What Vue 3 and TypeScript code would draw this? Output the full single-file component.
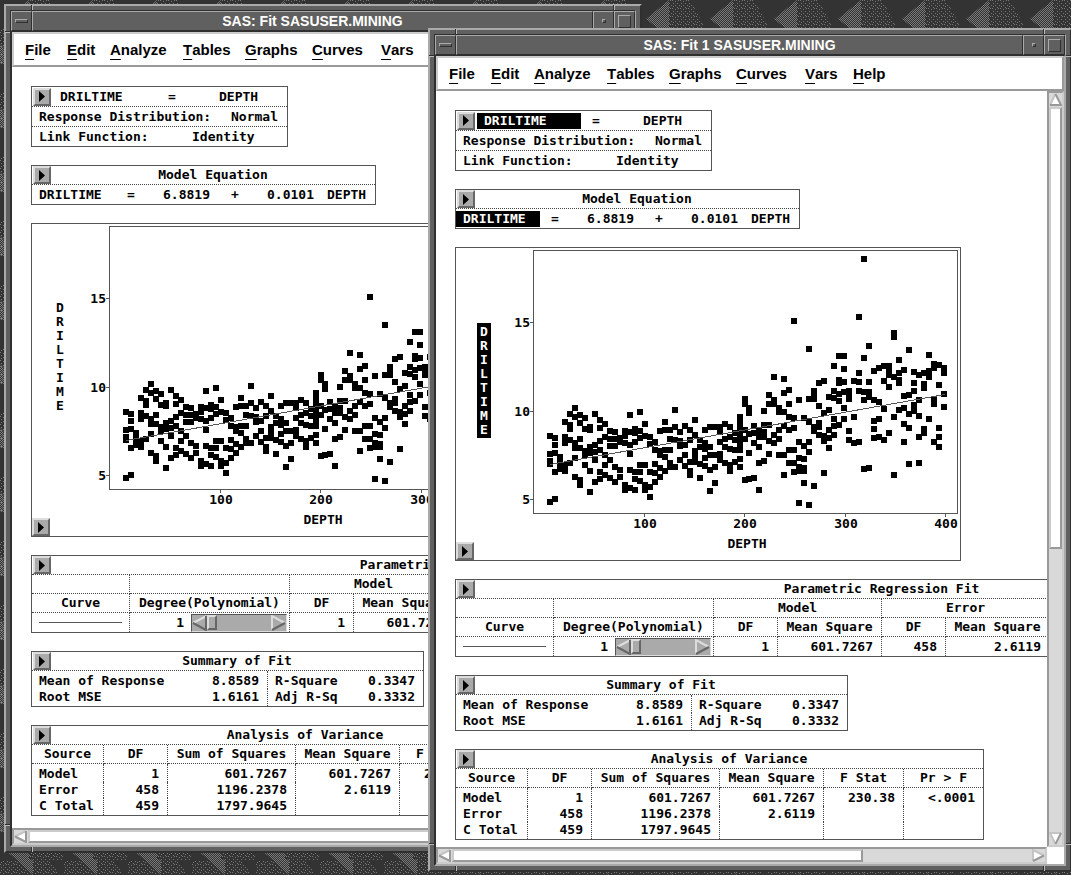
<script setup lang="ts">
interface FitWindow {
  id: string
  title: string
  selected: boolean
}

const windows: FitWindow[] = [
  { id: 'back', title: 'SAS: Fit SASUSER.MINING', selected: false },
  { id: 'front', title: 'SAS: Fit 1 SASUSER.MINING', selected: true },
]

const menus = ['File', 'Edit', 'Analyze', 'Tables', 'Graphs', 'Curves', 'Vars', 'Help']
const notches = ['v tl', 'v tr', 'v bl', 'v br', 'h lt', 'h rt', 'h lb', 'h rb']
const axisName = 'DRILTIME'.split('')

// Drill times per depth step, in thirds of a pixel below the top of each group.
const groups: { top: number; columns: number[][] }[] = [
  {
    top: 480,
    columns: [
      [109, 162, 183, 192, 306], [114, 135, 159, 216, 297], [172, 190, 207], [66, 111, 129, 195, 213],
      [42, 75, 87, 120, 190], [24, 51, 129, 144, 174, 231], [45, 69, 117, 144, 241, 255], [54, 87, 153, 164, 194],
      [81, 90, 141, 160, 213, 276], [42, 135, 155, 180, 247], [60, 84, 123, 150, 216, 237], [72, 111, 165, 195, 225],
      [93, 117, 138, 180, 234], [97, 117, 138, 201, 246], [114, 126, 210, 231], [94, 108, 128, 256, 270],
      [45, 96, 135, 161, 210, 264], [87, 100, 126, 216, 237, 270], [36, 93, 114, 195, 215, 243], [72, 108, 195, 255, 270],
      [111, 133, 216, 261, 291], [126, 150, 192, 219, 246], [93, 153, 165, 204, 231], [66, 90, 150, 171, 213],
      [90, 117, 150, 189, 201], [30, 80, 120, 200], [96, 122, 138, 180], [77, 135, 165, 198],
      [90, 120, 186, 213, 225], [60, 105, 153, 170, 186], [120, 141, 192, 234], [90, 129, 147, 174, 198],
      [81, 141, 165, 209, 273], [81, 165, 200, 249], [81, 95, 126, 162, 180], [72, 117, 141, 189],
      [81, 111, 147, 195, 213], [100, 120, 150, 185], [51, 66, 78, 90, 104, 120, 135, 150, 177, 201],
    ],
  },
  {
    top: 390,
    columns: [
      [87, 103, 180, 207, 330], [115, 128, 192, 249, 327], [168, 190, 219, 324], [183, 200, 231, 279, 360],
      [122, 165, 185, 200, 273], [75, 102, 165, 213, 252], [21, 90, 101, 195, 219], [113, 125, 180, 207, 255],
      [27, 69, 126, 168, 255, 315], [60, 102, 141, 180, 240, 279], [-147, 144, 174, 240, 279, 306],
      [90, 216, 264, 291, 303, 399], [144, 228, 267, 293, 303, 339], [-63, 87, 156, 216, 246, 405],
      [63, 75, 87, 171, 184, 348], [39, 108, 160, 172, 195], [33, 129, 198, 213, 309], [81, 120, 180, 204, 233],
      [-12, 63, 84, 147, 168, 195], [-42, 30, 40, 72, 92, 165], [-42, -3, 36, 66, 114, 147],
    ],
  },
  {
    top: 240,
    columns: [
      [213, 225, 237, 333, 360], [183, 292, 369], [-9, 159, 186, 213, 366], [-183, 114, 216, 240, 447],
      [78, 186, 216, 230, 444], [153, 240, 303, 327, 354], [144, 245, 297, 351], [138, 183, 267, 360],
      [138, 150, 165, 201, 339], [39, 50, 171, 291, 465], [120, 159, 180, 190, 270], [150, 228, 264, 312, 366],
      [90, 225, 282, 324, 432], [156, 189, 213, 255, 273], [165, 240, 288, 351, 429], [160, 192, 204, 327, 339],
      [105, 153, 171, 297], [132, 144, 240, 252, 366], [135, 195, 324, 351, 381], [144, 159, 222, 261],
    ],
  },
]

const points = groups
  .flatMap((g) => g.columns.map((ys) => ys.map((y) => y + g.top)))
  .flatMap((ys, k) =>
    ys.map((y) => ({ x: Math.round(95 + (k * 394) / 79) - 3, y: Math.round(y / 3) - 10 })),
  )

const yTicks = [
  { y: 75, label: '15' },
  { y: 164, label: '10' },
  { y: 252, label: '5' },
]
const xTicks = [
  { x: 189, label: '100' },
  { x: 289, label: '200' },
  { x: 390, label: '300' },
  { x: 490, label: '400' },
]

const anova = [
  ['Model', '1', '601.7267', '601.7267', '230.38', '<.0001'],
  ['Error', '458', '1196.2378', '2.6119', '', ''],
  ['C Total', '459', '1797.9645', '', '', ''],
]
const summary = [
  ['Mean of Response', '8.8589', 'R-Square', '0.3347'],
  ['Root MSE', '1.6161', 'Adj R-Sq', '0.3332'],
]
</script>

<template>
  <main class="desktop">
    <svg class="wallpaper" aria-hidden="true">
      <defs>
        <pattern id="dense" width="2" height="2" patternUnits="userSpaceOnUse">
          <rect width="1" height="1" fill="#7a7a7a" />
          <rect x="1" y="1" width="1" height="1" fill="#7a7a7a" />
        </pattern>
        <pattern id="sparse" width="8" height="8" patternUnits="userSpaceOnUse">
          <path d="M0 0h1v1h-1zM3 1h1v1h-1zM6 0h1v1h-1zM1 3h1v1h-1zM5 3h1v1h-1zM7 5h1v1h-1zM3 5h1v1h-1zM1 6h1v1h-1zM5 7h1v1h-1z" fill="#7a7a7a" />
        </pattern>
        <pattern id="tile" width="64" height="64" patternUnits="userSpaceOnUse">
          <path d="M29 0L6 19L18 28H29Z" fill="url(#dense)" />
          <path d="M29 0H50L62 22L64 28H29Z" fill="url(#sparse)" />
          <path d="M8 20L33 43V28Z" fill="url(#dense)" />
          <path d="M0 28H20L33 43H64V64H0Z" fill="url(#sparse)" />
          <path d="M0 44L20 64H0Z" fill="url(#dense)" />
          <path d="M33 28H50L60 43H33Z" fill="url(#sparse)" />
        </pattern>
      </defs>
      <rect width="100%" height="100%" fill="url(#tile)" shape-rendering="crispEdges" />
    </svg>

    <section v-for="w in windows" :key="w.id" class="window" :class="w.id">
      <span v-for="n in notches" :key="n" class="notch" :class="n"></span>

      <header class="titlebar">
        <button class="chrome" type="button" aria-label="Window menu"><i class="glyph bar"></i></button>
        <h1 class="caption">{{ w.title }}</h1>
        <button class="chrome" type="button" aria-label="Minimize"><i class="glyph dot"></i></button>
        <button class="chrome" type="button" aria-label="Maximize"><i class="glyph square"></i></button>
      </header>

      <div class="client">
        <nav class="menubar">
          <button v-for="m in menus" :key="m" type="button" class="menu"><span class="key">{{ m[0] }}</span>{{ m.slice(1) }}</button>
        </nav>

        <div class="view">
          <div class="content">
            <section class="panel model">
              <div class="row first">
                <button class="pop" type="button" aria-label="Model options"><svg viewBox="0 0 6 11"><path d="M0 0L6 5.500L0 11Z" /></svg></button>
                <span class="name" :class="{ selected: w.selected }">DRILTIME</span>
                <span class="equals">=</span>
                <span>DEPTH</span>
              </div>
              <div class="row distribution"><span>Response Distribution:</span><span>Normal</span></div>
              <div class="row link"><span>Link Function:</span><span>Identity</span></div>
            </section>

            <section class="panel equation">
              <div class="panel-title">
                <button class="pop" type="button" aria-label="Equation options"><svg viewBox="0 0 6 11"><path d="M0 0L6 5.500L0 11Z" /></svg></button>
                <h2>Model Equation</h2>
              </div>
              <div class="row terms">
                <span class="name" :class="{ selected: w.selected }">DRILTIME</span>
                <span class="equals">=</span>
                <span>6.8819</span>
                <span>+</span>
                <span>0.0101</span>
                <span>DEPTH</span>
              </div>
            </section>

            <section class="panel chart">
              <svg class="plot" width="504" height="312" viewBox="1 1 504 312" role="img" aria-label="DRILTIME by DEPTH">
                <g shape-rendering="crispEdges">
                  <rect x="78.500" y="3.500" width="424" height="263" class="frame" />
                  <path v-for="t in yTicks" :key="t.label" class="line" :d="`M75 ${t.y + 0.5}H78`" />
                  <path v-for="t in xTicks" :key="t.label" class="line" :d="`M${t.x + 0.5} 267V270`" />
                  <rect v-for="(p, i) in points" :key="i" :x="p.x" :y="p.y" width="6" height="6" />
                  <path class="line" d="M95 217.500L490 147.500" />
                  <rect v-if="w.selected" x="22" y="76" width="14" height="115" />
                </g>
                <text v-for="t in yTicks" :key="t.label" class="end" x="75" :y="t.y + 5">{{ t.label }}</text>
                <text v-for="t in xTicks" :key="t.label" class="mid" :x="t.x + 1" y="281">{{ t.label }}</text>
                <text class="mid" x="292" y="301">DEPTH</text>
                <text v-for="(c, i) in axisName" :key="i" class="mid" :class="{ inverse: w.selected }" x="29" :y="89 + i * 14">{{ c }}</text>
              </svg>
              <button class="pop corner-pop" type="button" aria-label="Graph options"><svg viewBox="0 0 6 11"><path d="M0 0L6 5.500L0 11Z" /></svg></button>
            </section>

            <section class="panel parametric">
              <div class="panel-title">
                <button class="pop" type="button" aria-label="Regression options"><svg viewBox="0 0 6 11"><path d="M0 0L6 5.500L0 11Z" /></svg></button>
                <h2>Parametric Regression Fit</h2>
              </div>
              <table>
                <colgroup><col class="w98" /><col class="w160" /><col class="w64" /><col class="w104" /><col class="w64" /><col class="w104" /><col /></colgroup>
                <thead>
                  <tr><th></th><th></th><th colspan="2">Model</th><th colspan="2">Error</th><th></th></tr>
                  <tr><th>Curve</th><th><label :for="'degree-' + w.id">Degree(Polynomial)</label></th><th>DF</th><th>Mean Square</th><th>DF</th><th>Mean Square</th><th></th></tr>
                </thead>
                <tbody>
                  <tr>
                    <td><div class="curve"></div></td>
                    <td>
                      <div class="degree">
                        <span>1</span>
                        <div class="slider">
                          <button type="button" aria-label="Lower degree"><svg viewBox="0 0 15 16"><path d="M14.500 1L1 8" class="hi" /><path d="M1 8L14 15V1" class="lo" /></svg></button>
                          <input :id="'degree-' + w.id" type="range" min="1" max="9" value="1" />
                          <button type="button" aria-label="Raise degree"><svg viewBox="0 0 15 16"><path d="M1 15V1L14 8" class="hi" /><path d="M1 15L14 8" class="lo" /></svg></button>
                        </div>
                      </div>
                    </td>
                    <td>1</td><td>601.7267</td><td>458</td><td>2.6119</td><td></td>
                  </tr>
                </tbody>
              </table>
            </section>

            <section class="panel summary">
              <div class="panel-title">
                <button class="pop" type="button" aria-label="Summary options"><svg viewBox="0 0 6 11"><path d="M0 0L6 5.500L0 11Z" /></svg></button>
                <h2>Summary of Fit</h2>
              </div>
              <table>
                <colgroup><col class="w150" /><col class="w86" /><col class="w75" /><col /></colgroup>
                <tbody>
                  <tr v-for="r in summary" :key="r[0]">
                    <th scope="row">{{ r[0] }}</th><td class="split">{{ r[1] }}</td><th scope="row">{{ r[2] }}</th><td>{{ r[3] }}</td>
                  </tr>
                </tbody>
              </table>
            </section>

            <section class="panel anova">
              <div class="panel-title">
                <button class="pop" type="button" aria-label="Variance options"><svg viewBox="0 0 6 11"><path d="M0 0L6 5.500L0 11Z" /></svg></button>
                <h2>Analysis of Variance</h2>
              </div>
              <table>
                <colgroup><col class="w72" /><col class="w64" /><col class="w128" /><col class="w104" /><col class="w80" /><col /></colgroup>
                <thead>
                  <tr><th>Source</th><th>DF</th><th>Sum of Squares</th><th>Mean Square</th><th>F Stat</th><th>Pr &gt; F</th></tr>
                </thead>
                <tbody>
                  <tr v-for="r in anova" :key="r[0]">
                    <th scope="row">{{ r[0] }}</th><td v-for="(v, i) in r.slice(1)" :key="i">{{ v }}</td>
                  </tr>
                </tbody>
              </table>
            </section>
          </div>

          <div class="scroll vertical">
            <button type="button" aria-label="Scroll up"><svg viewBox="0 0 13 13"><path d="M6.500 1L12 12H1Z" fill="#fff" /><path d="M1 12L6.500 1" class="sh" /><path d="M6.500 1L12 12H1" class="sl" /></svg></button>
            <div class="track"><div class="thumb"></div></div>
            <button type="button" aria-label="Scroll down"><svg viewBox="0 0 13 13"><path d="M1 1H12L6.500 12Z" fill="#fff" /><path d="M6.500 12L1 1H12" class="sh" /><path d="M12 1L6.500 12" class="sl" /></svg></button>
          </div>
          <div class="scroll horizontal">
            <button type="button" aria-label="Scroll left"><svg viewBox="0 0 13 13"><path d="M1 6.500L12 1V12Z" fill="#fff" /><path d="M12 1L1 6.500" class="sh" /><path d="M1 6.500L12 12V1" class="sl" /></svg></button>
            <div class="track"><div class="thumb"></div></div>
            <button type="button" aria-label="Scroll right"><svg viewBox="0 0 13 13"><path d="M1 1L12 6.500L1 12Z" fill="#fff" /><path d="M1 12V1L12 6.500" class="sh" /><path d="M12 6.500L1 12" class="sl" /></svg></button>
          </div>
          <div class="corner"></div>
        </div>
      </div>
    </section>
  </main>
</template>

<style>
body {
  margin: 0;
}
</style>

<style scoped>
* {
  box-sizing: border-box;
}
button {
  padding: 0;
  margin: 0;
  border: 0;
  background: none;
  color: inherit;
  font: inherit;
  display: flex;
  align-items: center;
  justify-content: center;
}
h1,
h2 {
  margin: 0;
  font-size: inherit;
  font-weight: bold;
}
.desktop {
  position: relative;
  min-height: 100vh;
  overflow: hidden;
  background: #333;
}
.wallpaper {
  position: absolute;
  inset: 0;
  width: 100%;
  height: 100%;
}
.window {
  position: absolute;
  padding: 4px;
  background: #606060;
  border: 2px solid;
  border-color: #aaa #2f2f2f #2f2f2f #aaa;
}
.back {
  left: 4px;
  top: 4px;
  width: 638px;
}
.front {
  left: 428px;
  top: 28px;
  right: -1px;
}
.notch {
  position: absolute;
}
.notch.v {
  width: 2px;
  height: 5px;
  background: linear-gradient(90deg, #2f2f2f 50%, #bbb 50%);
}
.notch.h {
  width: 5px;
  height: 2px;
  background: linear-gradient(#2f2f2f 50%, #bbb 50%);
}
.tl, .tr { top: -1px; }
.bl, .br { bottom: -1px; }
.tl, .bl { left: 25px; }
.tr, .br { right: 25px; }
.lt, .rt { top: 25px; }
.lb, .rb { bottom: 25px; }
.lt, .lb { left: -1px; }
.rt, .rb { right: -1px; }

.titlebar {
  display: flex;
  height: 21px;
  border: 1px solid;
  border-color: #2f2f2f #aaa transparent #2f2f2f;
  border-bottom: 0;
}
.chrome,
.caption {
  border: 1px solid;
  border-color: #aaa #2f2f2f #2f2f2f #aaa;
}
.chrome {
  width: 21px;
  flex: none;
}
.caption {
  flex: 1;
  text-align: center;
  color: #fff;
  font: bold 14px/18px "Liberation Sans", Arial, sans-serif;
  white-space: nowrap;
}
.glyph {
  display: block;
  border: 1px solid;
}
.bar {
  width: 13px;
  height: 4px;
  border-color: #aaa #2f2f2f #2f2f2f #aaa;
}
.dot {
  width: 4px;
  height: 4px;
  border-color: #aaa #2f2f2f #2f2f2f #aaa;
}
.square {
  width: 13px;
  height: 13px;
  border-color: #aaa #2f2f2f #2f2f2f #aaa;
}

.client {
  border: 2px solid;
  border-width: 1px 2px 2px 2px;
  border-color: #2f2f2f #aaa #aaa #2f2f2f;
  background: #fff;
}
.menubar {
  display: grid;
  grid-template-columns: 42px 43px 73px 62px 67px 69px 48px 48px;
  height: 35px;
  padding-left: 11px;
  overflow: hidden;
  border: 2px solid;
  border-color: #ccc #999 #999 #ccc;
}
.menu {
  justify-content: flex-start;
  font: bold 15px/30px "Liberation Sans", Arial, sans-serif;
  color: #000;
}
.key {
  text-decoration: underline;
  text-decoration-thickness: 1px;
  text-underline-offset: 4px;
  text-decoration-skip-ink: none;
}
.view {
  display: grid;
  grid-template-columns: minmax(0, 1fr) 17px;
}
.content {
  display: flex;
  flex-direction: column;
  align-items: flex-start;
  gap: 18px;
  overflow: hidden;
  padding: 19px 0 7px 19px;
  color: #000;
  font: bold 13px/16px "DejaVu Sans Mono", "Liberation Mono", monospace;
  white-space: pre;
}
.back .content {
  padding-bottom: 12px;
}
.panel {
  flex: none;
  border: 1px solid #555;
}
.model { width: 257px; }
.equation { width: 345px; }
.chart { width: 506px; }
.parametric { width: 834px; }
.summary { width: 393px; }
.anova { width: 529px; }

.panel-title {
  display: flex;
  height: 19px;
  padding-left: 1px;
  border-bottom: 1px dotted #444;
}
.panel-title h2 {
  flex: 1;
  text-align: center;
  line-height: 18px;
}
.pop {
  flex: none;
  width: 18px;
  height: 18px;
  background: #aaa;
  border: 2px solid;
  border-color: #ddd #666 #666 #ddd;
}
.pop svg {
  width: 6px;
  height: 11px;
}
.row {
  display: grid;
  align-items: center;
  height: 20px;
  border-bottom: 1px dotted #444;
}
.row:last-child {
  height: 19px;
  border-bottom: 0;
}
.first {
  grid-template-columns: 20px 104px 62px 1fr;
  padding-left: 1px;
}
.distribution {
  grid-template-columns: 192px 1fr;
  padding-left: 7px;
}
.link {
  grid-template-columns: 153px 1fr;
  padding-left: 7px;
}
.terms {
  grid-template-columns: 84px 47px 68px 36px 60px 1fr;
}
.name {
  padding-left: 7px;
}
.equals {
  padding-left: 11px;
}
.selected {
  background: #000;
  color: #fff;
}

.chart {
  position: relative;
}
.plot {
  display: block;
}
.plot text {
  fill: #000;
}
.plot .inverse {
  fill: #fff;
}
.frame,
.line {
  fill: none;
  stroke: #555;
}
.mid { text-anchor: middle; }
.end { text-anchor: end; }
.corner-pop {
  position: absolute;
  left: 0;
  bottom: 0;
}

table {
  width: 100%;
  table-layout: fixed;
  border-collapse: separate;
  border-spacing: 0;
}
.w64 { width: 64px; }
.w72 { width: 72px; }
.w75 { width: 75px; }
.w80 { width: 80px; }
.w86 { width: 86px; }
.w98 { width: 98px; }
.w104 { width: 104px; }
.w128 { width: 128px; }
.w150 { width: 150px; }
.w160 { width: 160px; }
th,
td {
  padding: 0;
  font-weight: bold;
  height: 16px;
}
thead th {
  height: 19px;
  text-align: center;
  line-height: 18px;
  border-right: 1px dotted #444;
  border-bottom: 1px dotted #444;
}
td {
  text-align: right;
  padding-right: 8px;
  border-right: 1px dotted #444;
}
tbody th {
  text-align: left;
  padding-left: 7px;
}
.anova tbody th {
  border-right: 1px dotted #444;
}
.anova tr > :last-child,
.summary td:last-child {
  border-right: 0;
}
.summary td {
  border-right: 0;
}
.summary td.split {
  border-right: 1px dotted #444;
}
.summary tr:first-child > *,
.anova tbody tr:first-child > * {
  height: 18px;
  padding-top: 2px;
}
.summary tr:last-child > *,
.anova tbody tr:last-child > * {
  height: 17px;
  padding-bottom: 1px;
}
.parametric td {
  height: 19px;
}
.parametric td:nth-child(1),
.parametric td:nth-child(2) {
  padding: 0;
}
.curve {
  height: 1px;
  margin: 0 7px;
  background: #555;
}
.degree {
  display: flex;
  align-items: center;
  justify-content: flex-end;
  gap: 7px;
  height: 19px;
  padding-right: 2px;
}
.slider {
  display: flex;
  width: 96px;
  height: 18px;
  background: #aaa;
  border: 1px solid;
  border-color: #555 #ddd #ddd #555;
}
.slider button {
  flex: none;
  width: 15px;
}
.slider svg {
  width: 15px;
  height: 16px;
  fill: none;
  stroke-width: 2;
}
.hi { stroke: #ddd; }
.lo { stroke: #666; }
.slider input {
  appearance: none;
  flex: 1;
  min-width: 0;
  margin: 0;
  height: 16px;
  background: #aaa;
}
.slider input::-webkit-slider-thumb {
  appearance: none;
  width: 10px;
  height: 15px;
  background: #aaa;
  border: 2px solid;
  border-color: #ddd #666 #666 #ddd;
}

.scroll {
  display: flex;
  background: #d9d9d9;
  border: 2px solid;
  border-color: #999 #ccc #ccc #999;
}
.vertical {
  flex-direction: column;
}
.scroll button {
  flex: none;
  width: 13px;
  height: 13px;
}
.scroll svg {
  width: 13px;
  height: 13px;
  fill: none;
  stroke-width: 2;
}
.sh { stroke: #c4c4c4; }
.sl { stroke: #999; }
.track {
  flex: 1;
  min-width: 0;
  min-height: 0;
  margin: 1px 0;
}
.horizontal .track {
  margin: 0 1px;
}
.thumb {
  background: #fff;
  border: 2px solid;
  border-color: #ccc #999 #999 #ccc;
}
.vertical .thumb {
  width: 13px;
  height: 61%;
}
.horizontal .thumb {
  height: 13px;
  width: 71%;
}
.corner {
  background: #fff;
}
</style>
